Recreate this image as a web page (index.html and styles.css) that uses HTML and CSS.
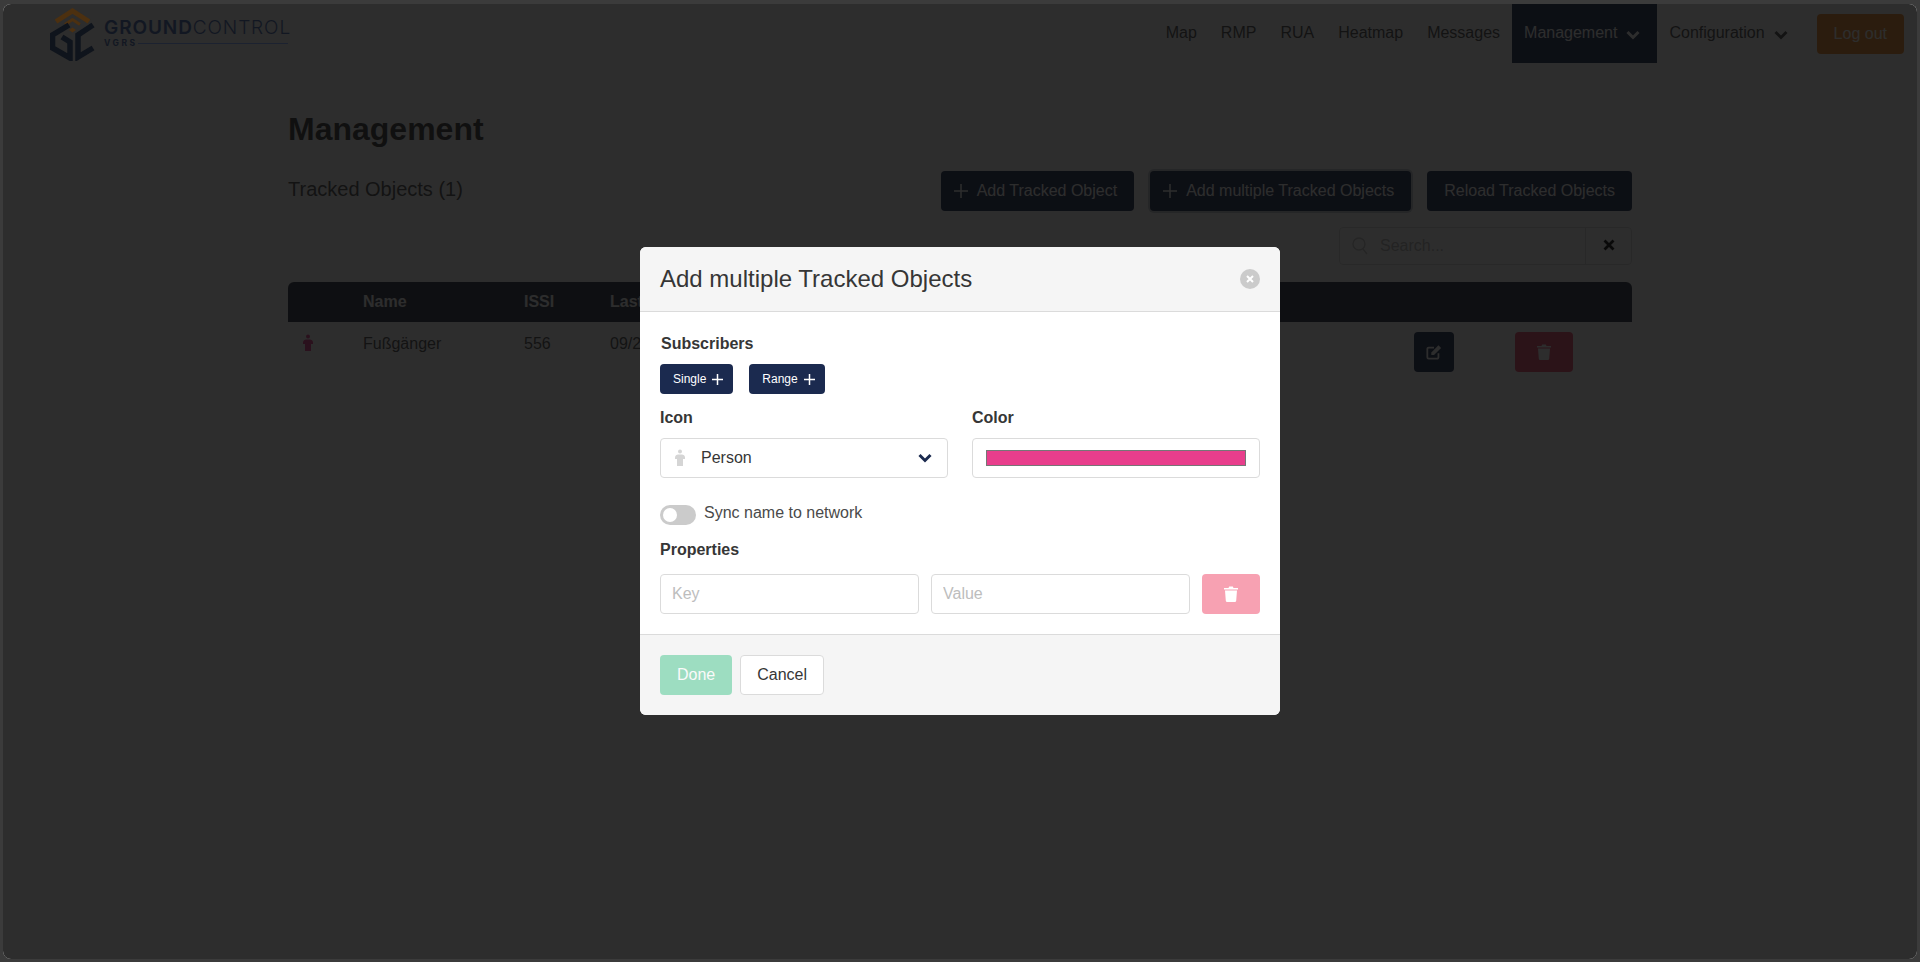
FILE: index.html
```html
<!DOCTYPE html>
<html lang="en">
<head>
    <meta charset="UTF-8">
    <title>GroundControl - Management</title>
    <link rel="stylesheet" href="styles.css">
</head>
<body>
    <div class="screen">
        <div class="page">
            <nav class="navbar">
                <a class="brand">
                    <svg class="brand-mark" viewBox="0 0 46 54" width="46" height="54">
                        <polyline class="mark-roof" points="6,14.5 22.5,4 39,14.5"/>
                        <polyline class="mark-roof-inner" points="15,17.5 22.5,12.5 30,17.5"/>
                        <polygon class="mark-dot" points="22.5,20.5 26,23 22.5,25.5 19,23"/>
                        <polyline class="mark-letter" points="19,18 2.5,28 2.5,41 20,51 20,35 12,30"/>
                        <polyline class="mark-letter" points="43,18 28,28 28,50 43,41"/>
                    </svg>
                    <span class="brand-text">
                        <span class="brand-name"><b>GROUND</b>CONTROL</span>
                        <span class="brand-sub"><b>VGRS</b><i></i></span>
                    </span>
                </a>
                <div class="nav-menu">
                    <a class="nav-item">Map</a>
                    <a class="nav-item">RMP</a>
                    <a class="nav-item">RUA</a>
                    <a class="nav-item">Heatmap</a>
                    <a class="nav-item">Messages</a>
                    <a class="nav-item dropdown active">Management
                        <svg class="chevron" viewBox="0 0 14 10" width="14" height="10"><polyline points="1.500,2 7,7.500 12.500,2"/></svg>
                    </a>
                    <a class="nav-item dropdown">Configuration
                        <svg class="chevron" viewBox="0 0 14 10" width="14" height="10"><polyline points="1.500,2 7,7.500 12.500,2"/></svg>
                    </a>
                    <div class="nav-end"><button class="btn btn-orange">Log out</button></div>
                </div>
            </nav>

            <main class="container">
                <h1 class="title">Management</h1>
                <div class="section-head">
                    <h2 class="subtitle">Tracked Objects (1)</h2>
                    <div class="actions">
                        <button class="btn btn-navy">
                            <svg class="plus" viewBox="0 0 14 14" width="14" height="14"><path d="M7 0v14M0 7h14"/></svg>
                            Add Tracked Object
                        </button>
                        <button class="btn btn-navy btn-focus">
                            <svg class="plus" viewBox="0 0 14 14" width="14" height="14"><path d="M7 0v14M0 7h14"/></svg>
                            Add multiple Tracked Objects
                        </button>
                        <button class="btn btn-navy">Reload Tracked Objects</button>
                    </div>
                </div>
                <div class="search-row">
                    <div class="search">
                        <div class="search-field">
                            <svg class="search-icon" viewBox="0 0 16 18" width="16" height="18"><circle cx="7" cy="7" r="6"/><path d="M11 12l4 5"/></svg>
                            <input class="search-input" type="text" placeholder="Search...">
                        </div>
                        <button class="search-clear">
                            <svg viewBox="0 0 12 12" width="12" height="12"><path d="M1.500 1.500l9 9M10.500 1.500l-9 9"/></svg>
                        </button>
                    </div>
                </div>

                <table class="objects">
                    <colgroup>
                        <col class="col-icon"><col class="col-name"><col class="col-issi"><col>
                        <col class="col-edit"><col class="col-delete">
                    </colgroup>
                    <thead>
                        <tr><th></th><th>Name</th><th>ISSI</th><th>Last</th><th></th><th></th></tr>
                    </thead>
                    <tbody>
                        <tr>
                            <td>
                                <svg class="person person-red" viewBox="0 0 12 18" width="12" height="18">
                                    <circle cx="6" cy="2.5" r="2"/>
                                    <path d="M1 8.5C1 6 3 5.5 6 5.5S11 6 11 8.5v1.5H9v7H3v-7H1z"/>
                                </svg>
                            </td>
                            <td>Fußgänger</td>
                            <td>556</td>
                            <td>09/2</td>
                            <td>
                                <button class="btn btn-navy btn-square">
                                    <svg class="edit-icon" viewBox="0 0 18 18" width="16" height="16">
                                        <path class="edit-box" d="M14 10.5V15a1.5 1.5 0 0 1-1.500 1.500H3A1.500 1.500 0 0 1 1.500 15V5.500A1.500 1.500 0 0 1 3 4h6"/>
                                        <path class="edit-pen" d="M6 9.500L14 1.500l3 3L9 12.500H6z"/>
                                    </svg>
                                </button>
                            </td>
                            <td>
                                <button class="btn btn-red btn-wide">
                                    <svg class="trash" viewBox="0 0 14 16" width="14" height="16"><path d="M0 2h4.500l.7-1.500h3.600L9.500 2H14v1.500H0zM1 4.500h12l-.8 10.200A1.400 1.400 0 0 1 10.800 16H3.200a1.400 1.400 0 0 1-1.400-1.300z"/></svg>
                                </button>
                            </td>
                        </tr>
                    </tbody>
                </table>
            </main>
        </div>

        <div class="modal-background"></div>

        <div class="modal">
            <div class="modal-card">
                <header class="modal-head">
                    <p class="modal-title">Add multiple Tracked Objects</p>
                    <button class="delete">
                        <svg viewBox="0 0 10 10" width="10" height="10"><path d="M2 2l6 6M8 2l-6 6"/></svg>
                    </button>
                </header>
                <section class="modal-body">
                    <label class="label label-subscribers">Subscribers</label>
                    <div class="small-buttons">
                        <button class="btn btn-navy btn-small">Single
                            <svg class="plus" viewBox="0 0 11 11" width="11" height="11"><path d="M5.500 0v11M0 5.500h11"/></svg>
                        </button>
                        <button class="btn btn-navy btn-small">Range
                            <svg class="plus" viewBox="0 0 11 11" width="11" height="11"><path d="M5.500 0v11M0 5.500h11"/></svg>
                        </button>
                    </div>
                    <div class="two-cols">
                        <div class="field">
                            <label class="label">Icon</label>
                            <div class="select-box">
                                <svg class="person person-grey" viewBox="0 0 12 18" width="12" height="18">
                                    <circle cx="6" cy="2.500" r="2"/>
                                    <path d="M1 8.500C1 6 3 5.500 6 5.500S11 6 11 8.500v1.500H9v7H3v-7H1z"/>
                                </svg>
                                <span class="select-value">Person</span>
                                <svg class="chevron chevron-navy" viewBox="0 0 14 10" width="14" height="10"><polyline points="1.500,2 7,7.500 12.500,2"/></svg>
                            </div>
                        </div>
                        <div class="field">
                            <label class="label">Color</label>
                            <div class="color-box"><div class="color-swatch"></div></div>
                        </div>
                    </div>
                    <div class="toggle-row">
                        <span class="toggle"><span class="toggle-knob"></span></span>
                        <span class="toggle-text">Sync name to network</span>
                    </div>
                    <label class="label">Properties</label>
                    <div class="property-row">
                        <input class="input" type="text" placeholder="Key">
                        <input class="input" type="text" placeholder="Value">
                        <button class="btn btn-red btn-disabled">
                            <svg class="trash" viewBox="0 0 14 16" width="14" height="16"><path d="M0 2h4.500l.7-1.500h3.600L9.500 2H14v1.500H0zM1 4.500h12l-.8 10.200A1.400 1.400 0 0 1 10.800 16H3.200a1.400 1.400 0 0 1-1.400-1.300z"/></svg>
                        </button>
                    </div>
                </section>
                <footer class="modal-foot">
                    <button class="btn btn-green btn-disabled">Done</button>
                    <button class="btn btn-plain">Cancel</button>
                </footer>
            </div>
        </div>
    </div>
</body>
</html>
```

FILE: styles.css
```css
* {
    box-sizing: border-box;
}
body {
    margin: 0;
    font-family: "Liberation Sans", Arial, sans-serif;
    font-size: 16px;
    color: #4a4a4a;
    background-color: #3b3b3b;
}
button, input {
    font-family: inherit;
    font-size: 16px;
}
.screen {
    position: relative;
    height: 962px;
    padding: 4px 3px 3px;
    overflow: hidden;
}
.page {
    height: 100%;
    background-color: #fff;
    border-radius: 8px;
}

/* navbar */
.navbar {
    display: flex;
    justify-content: space-between;
    height: 59px;
    padding-right: 13px;
}
.brand {
    display: flex;
    align-items: flex-start;
    padding-left: 47px;
    padding-top: 3px;
    position: relative;
    z-index: 2;
}
.mark-roof {
    fill: none;
    stroke: #4c3010;
    stroke-width: 5;
}
.mark-roof-inner {
    fill: none;
    stroke: #4c3010;
    stroke-width: 3;
}
.mark-dot {
    fill: #4c3010;
}
.mark-letter {
    fill: none;
    stroke: #0f141c;
    stroke-width: 5.500;
}
.brand-text {
    display: flex;
    flex-direction: column;
    margin-left: 8px;
    padding-top: 11px;
    width: 184px;
    color: #121722;
}
.brand-name {
    font-family: Inter, sans-serif;
    font-weight: 300;
    font-size: 19px;
    line-height: 20px;
    letter-spacing: .9px;
    white-space: nowrap;
}
.brand-name b {
    font-weight: 600;
}
.brand-sub {
    display: flex;
    align-items: center;
    font-family: Inter, sans-serif;
    font-size: 8.500px;
    line-height: 10px;
    letter-spacing: 2.500px;
}
.brand-sub i {
    flex: 1;
    height: 1px;
    background-color: #1c2230;
}
.nav-menu {
    display: flex;
}
.nav-item {
    display: flex;
    align-items: center;
    padding: 0 12px 1px;
    color: #4a4a4a;
}
.dropdown {
    padding-right: 16px;
}
.dropdown .chevron {
    margin-left: 9px;
    margin-top: 4px;
}
.active {
    padding-right: 17px;
    background-color: #1b2a4f;
    color: #fff;
}
.nav-end {
    display: flex;
    align-items: center;
    padding-left: 13px;
}
.chevron polyline {
    fill: none;
    stroke: currentColor;
    stroke-width: 3;
}
.chevron-navy {
    color: #1b2a4f;
}

/* buttons */
.btn {
    display: inline-flex;
    align-items: center;
    justify-content: center;
    height: 40px;
    padding: 0 16px;
    border: 1px solid transparent;
    border-radius: 4px;
    color: #fff;
    white-space: nowrap;
}
.btn-navy {
    background-color: #1b2a4f;
}
.btn-orange {
    background-color: #f08a24;
}
.btn-red {
    background-color: #f14668;
}
.btn-green {
    background-color: #48c78e;
}
.btn-disabled {
    opacity: .5;
}
.btn-plain {
    background-color: #fff;
    border-color: #dbdbdb;
    color: #363636;
}
.btn-focus {
    box-shadow: 0 0 0 2px rgba(27, 42, 79, .25);
}
.btn-square {
    width: 40px;
    padding: 0;
}
.btn-wide {
    width: 58px;
    padding: 0;
}
.btn .plus {
    margin-right: 9px;
    margin-left: -4px;
}
.plus path {
    fill: none;
    stroke: currentColor;
    stroke-width: 1.500;
}
.trash path {
    fill: #fff;
}
.edit-box {
    fill: none;
    stroke: #fff;
    stroke-width: 2;
}
.edit-pen {
    fill: #fff;
}

/* page content */
.container {
    width: 1344px;
    margin: 0 auto;
    padding-top: 48px;
}
.title {
    margin: 0 0 24px;
    font-size: 32px;
    line-height: 36px;
    font-weight: 700;
    color: #363636;
}
.section-head {
    display: flex;
    justify-content: space-between;
}
.subtitle {
    margin: 0;
    padding-top: 3px;
    font-size: 20px;
    line-height: 30px;
    font-weight: 400;
    color: #4a4a4a;
}
.actions {
    display: flex;
    gap: 16px;
}
.search-row {
    display: flex;
    justify-content: flex-end;
    margin: 16px 0 17px;
}
.search {
    display: flex;
    width: 293px;
    height: 38px;
    border: 1px solid #dbdbdb;
    border-radius: 4px;
}
.search-field {
    flex: 1;
    display: flex;
    align-items: center;
    padding-left: 12px;
}
.search-icon {
    fill: none;
    stroke: #c4c4c4;
    stroke-width: 1.400;
    flex: none;
}
.search-input {
    width: 100%;
    margin-left: 12px;
    padding: 0;
    border: none;
    background: none;
    outline: none;
}
.search-input::placeholder {
    color: #b5b5b5;
}
.search-clear {
    width: 46px;
    padding: 0;
    border: none;
    border-left: 1px solid #dbdbdb;
    background: none;
}
.search-clear path {
    fill: none;
    stroke: #000;
    stroke-width: 2.800;
}
.objects {
    width: 100%;
    table-layout: fixed;
    border-collapse: separate;
    border-spacing: 0;
}
.col-icon {
    width: 63px;
}
.col-name {
    width: 161px;
}
.col-issi {
    width: 86px;
}
.col-edit {
    width: 101px;
}
.col-delete {
    width: 129px;
}
.objects th {
    height: 40px;
    padding: 0 12px;
    text-align: left;
    background-color: #262d3f;
    color: #fff;
}
.objects th:first-child {
    border-top-left-radius: 6px;
}
.objects th:last-child {
    border-top-right-radius: 6px;
}
.objects td {
    padding: 10px 12px;
    color: #4a4a4a;
    line-height: 24px;
    vertical-align: top;
    white-space: nowrap;
    overflow: hidden;
}
.objects td .btn {
    vertical-align: top;
}
.person {
    display: block;
}
.person-red {
    fill: #e83e8c;
    margin-left: 2px;
    margin-top: 2px;
}
.person-grey {
    fill: #d5d5d5;
    flex: none;
}

/* modal */
.modal-background {
    position: absolute;
    top: 4px;
    left: 3px;
    right: 3px;
    bottom: 3px;
    border-radius: 8px;
    background-color: rgba(10, 10, 10, .86);
}
.modal {
    position: absolute;
    top: 0;
    left: 0;
    right: 0;
    bottom: 0;
    display: flex;
    align-items: center;
    justify-content: center;
    z-index: 3;
}
.modal-card {
    width: 640px;
    height: 468px;
    border-radius: 6px;
    overflow: hidden;
    background-color: #fff;
    display: flex;
    flex-direction: column;
}
.modal-head {
    display: flex;
    align-items: center;
    justify-content: space-between;
    height: 65px;
    padding: 0 20px;
    background-color: #f5f5f5;
    border-bottom: 1px solid #dbdbdb;
}
.modal-title {
    margin: 0;
    font-size: 24px;
    line-height: 30px;
    color: #363636;
}
.delete {
    display: flex;
    align-items: center;
    justify-content: center;
    width: 20px;
    height: 20px;
    padding: 0;
    border: none;
    border-radius: 50%;
    background-color: #cbcbcb;
}
.delete path {
    fill: none;
    stroke: #fff;
    stroke-width: 2;
}
.modal-body {
    flex: 1;
    padding: 20px 20px 0;
}
.label {
    display: block;
    font-weight: 700;
    line-height: 24px;
    color: #363636;
}
.label-subscribers {
    padding-left: 1px;
}
.small-buttons {
    display: flex;
    gap: 16px;
    margin: 8px 0 12px;
}
.btn-small {
    height: 30px;
    padding: 0 9px 0 12px;
    font-size: 12px;
}
.btn-small.btn .plus {
    margin: 0 0 0 6px;
}
.two-cols {
    display: grid;
    grid-template-columns: 1fr 1fr;
    gap: 24px;
}
.field .label {
    margin-bottom: 8px;
}
.select-box, .color-box, .input {
    height: 40px;
    border: 1px solid #dbdbdb;
    border-radius: 4px;
    background-color: #fff;
}
.select-box {
    display: flex;
    align-items: center;
    padding: 0 15px 0 13px;
    color: #363636;
}
.select-box .select-value {
    flex: 1;
    margin-left: 15px;
}
.color-box {
    padding: 11px 13px;
}
.color-swatch {
    height: 100%;
    background-color: #e83e8c;
    border: 1px solid #767676;
}
.toggle-row {
    display: flex;
    align-items: center;
    gap: 8px;
    height: 24px;
    margin: 23px 0 13px;
}
.toggle {
    display: block;
    width: 36px;
    height: 20px;
    margin-top: 4px;
    padding: 3px;
    border-radius: 10px;
    background-color: #cbcbcb;
}
.toggle-knob {
    display: block;
    width: 14px;
    height: 14px;
    border-radius: 50%;
    background-color: #fff;
}
.property-row {
    display: grid;
    grid-template-columns: 1fr 1fr 58px;
    gap: 12px;
    margin-top: 12px;
}
.input {
    width: 100%;
    padding: 0 11px;
    outline: none;
}
.input::placeholder {
    color: #bdbdbd;
}
.property-row .btn {
    padding: 0;
}
.modal-foot {
    display: flex;
    gap: 8px;
    height: 81px;
    padding: 20px;
    background-color: #f5f5f5;
    border-top: 1px solid #dbdbdb;
}
```
